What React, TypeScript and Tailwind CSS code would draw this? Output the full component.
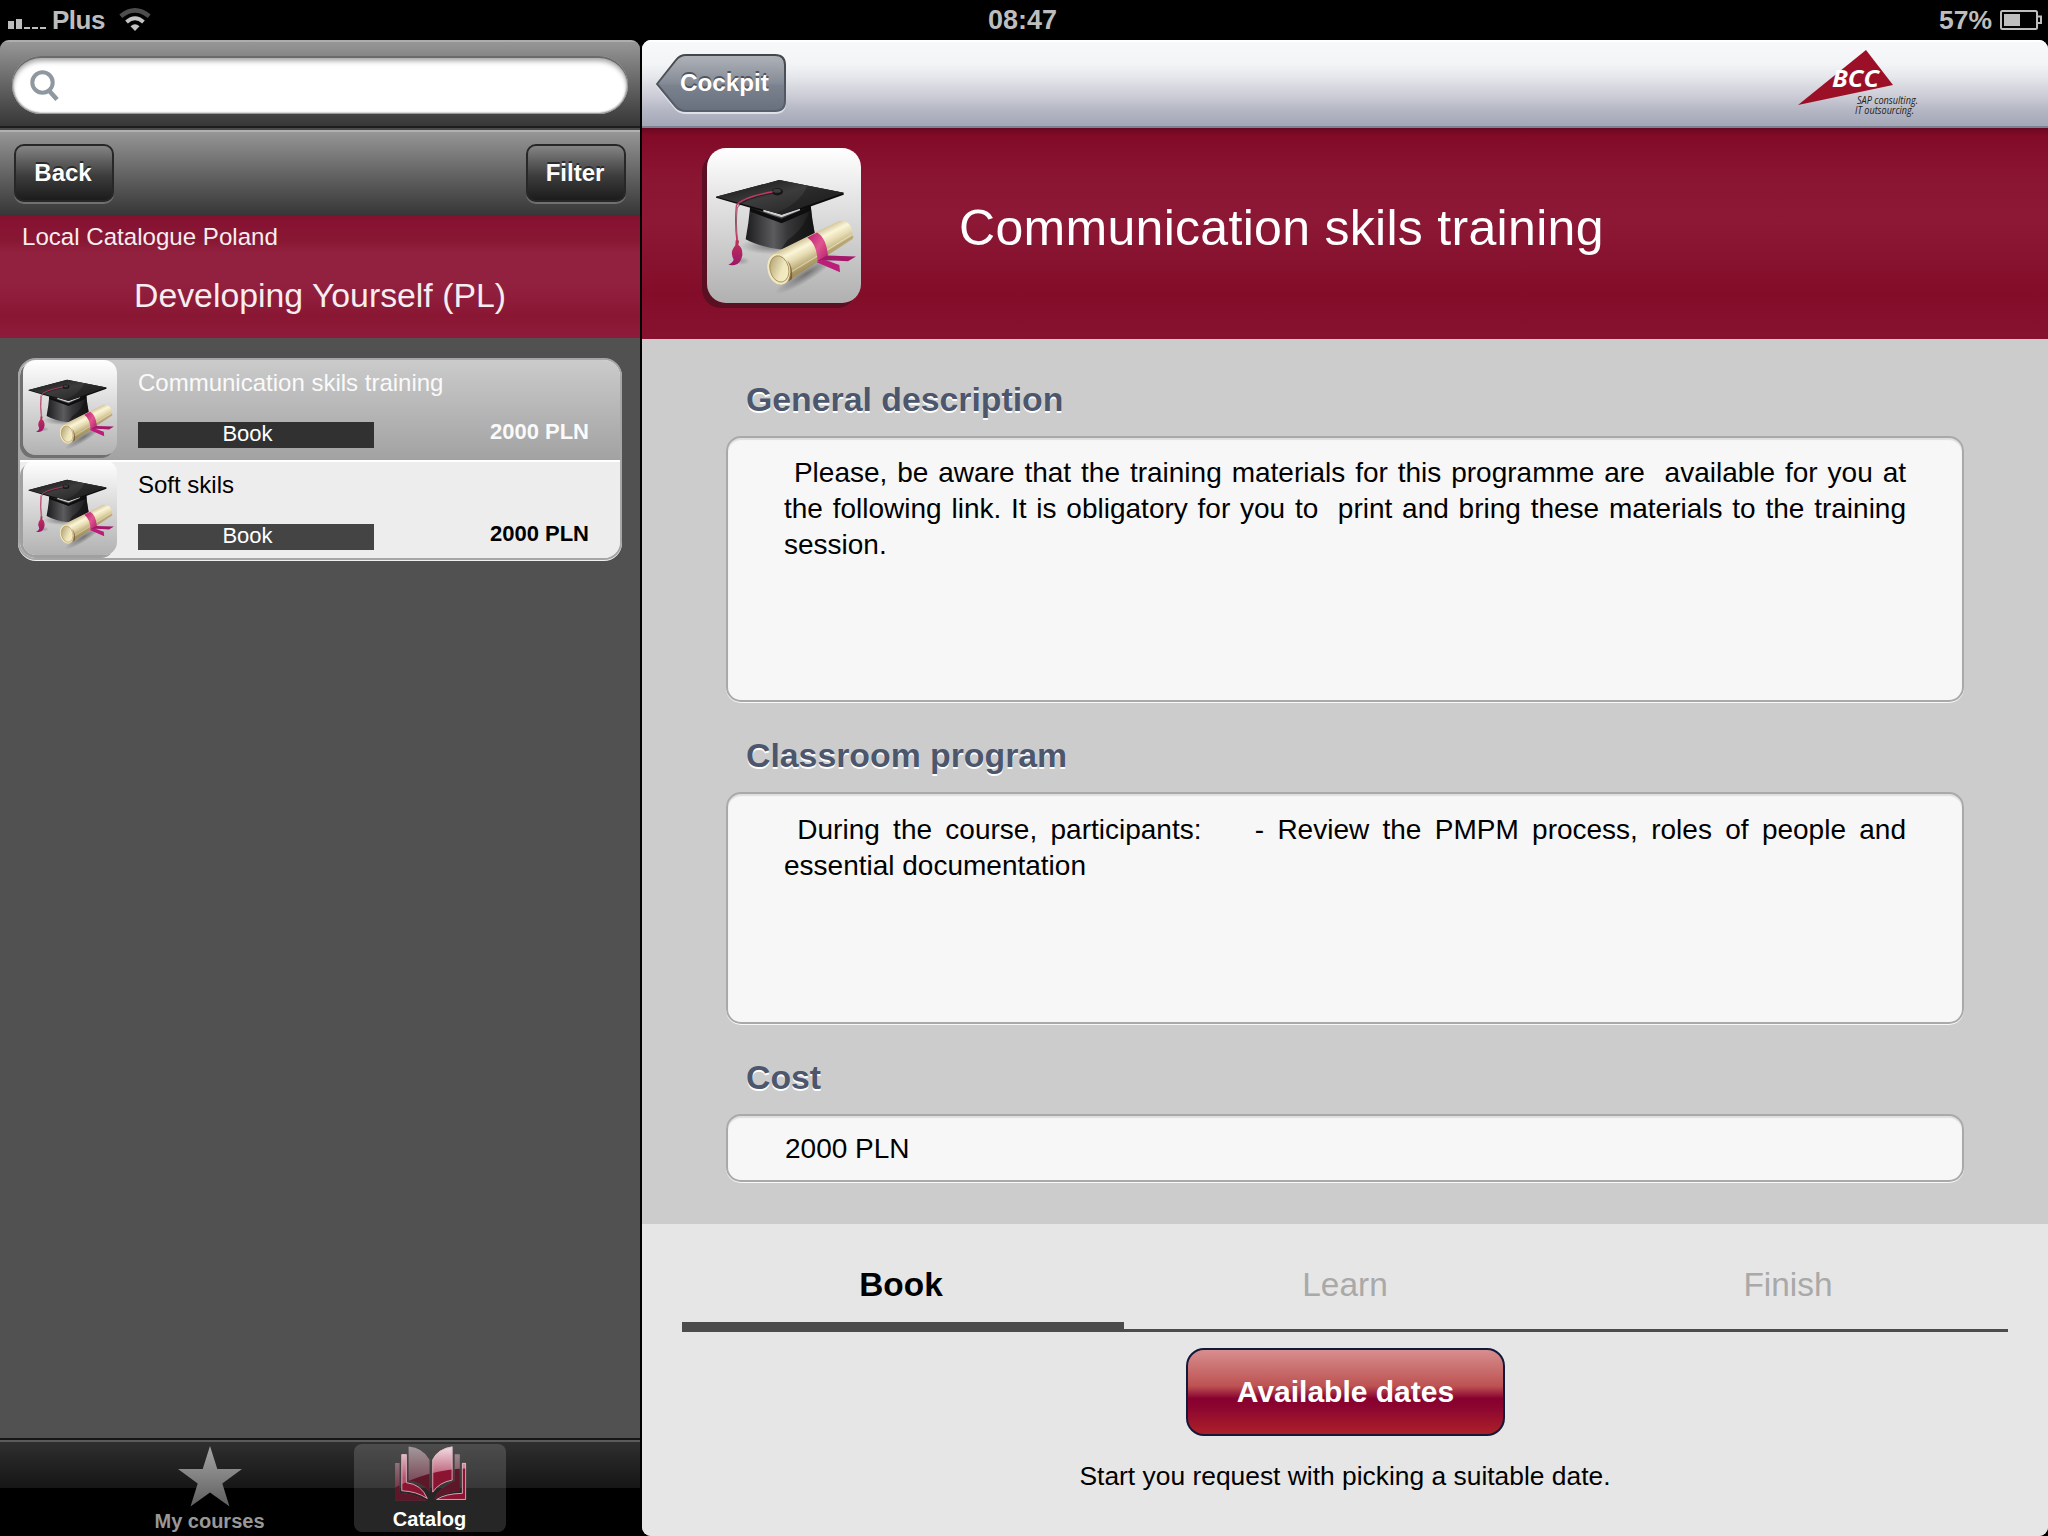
import React from "react";

const heading =
  "ml-[20px] text-[33.8px] leading-[40px] font-bold text-[#4c566c] [text-shadow:0_2px_0_#fff]";
const field =
  "w-[1238px] rounded-[15px] border-2 border-[#a9a9a9] bg-[#f7f7f7] shadow-[0_1px_0_#f8f8f8,inset_0_2px_1px_#dedede] text-[28px] leading-[36px] text-black";

function CourseArt({ id, className }: { id: string; className: string }) {
  const u = (n: string) => `url(#${id}-${n})`;
  return (
    <svg viewBox="21 24 462 464" preserveAspectRatio="none" className={className}>
      <defs>
        <linearGradient id={`${id}-board`} x1="0" y1="0" x2="1" y2="1">
          <stop offset="0" stopColor="#111" />
          <stop offset="0.45" stopColor="#3c3c3c" />
          <stop offset="0.75" stopColor="#2b2b2b" />
          <stop offset="1" stopColor="#0c0c0c" />
        </linearGradient>
        <linearGradient id={`${id}-skull`} x1="0" y1="0" x2="1" y2="0">
          <stop offset="0" stopColor="#1b1b1d" />
          <stop offset="0.4" stopColor="#5c5c5f" />
          <stop offset="0.6" stopColor="#38383a" />
          <stop offset="1" stopColor="#161617" />
        </linearGradient>
        <linearGradient id={`${id}-paper`} gradientUnits="userSpaceOnUse" x1="310" y1="290" x2="350" y2="368">
          <stop offset="0" stopColor="#c9b98c" />
          <stop offset="0.3" stopColor="#fbf6d8" />
          <stop offset="0.55" stopColor="#e5dab0" />
          <stop offset="1" stopColor="#a3905c" />
        </linearGradient>
        <linearGradient id={`${id}-hole`} x1="0" y1="0" x2="1" y2="1">
          <stop offset="0" stopColor="#a8966a" />
          <stop offset="0.6" stopColor="#efe7bd" />
          <stop offset="1" stopColor="#f6f0cb" />
        </linearGradient>
        <linearGradient id={`${id}-band`} x1="0" y1="0" x2="1" y2="1">
          <stop offset="0" stopColor="#b81c6d" />
          <stop offset="0.5" stopColor="#e0558f" />
          <stop offset="1" stopColor="#b01a68" />
        </linearGradient>
        <linearGradient id={`${id}-tassel`} x1="0" y1="0" x2="0" y2="1">
          <stop offset="0" stopColor="#c23258" />
          <stop offset="1" stopColor="#9b1769" />
        </linearGradient>
        <radialGradient id={`${id}-shade`}>
          <stop offset="0" stopColor="#000" stopOpacity="0.4" />
          <stop offset="1" stopColor="#000" stopOpacity="0" />
        </radialGradient>
      </defs>
      <ellipse cx="215" cy="318" rx="95" ry="24" fill={u("shade")} />
      <ellipse cx="320" cy="400" rx="110" ry="22" fill={u("shade")} transform="rotate(-32 320 400)" />
      <ellipse cx="125" cy="362" rx="24" ry="12" fill={u("shade")} opacity="0.5" />
      <path d="M151 195 L332 195 Q336 240 346 290 L243 328 Q175 318 137 297 Q146 250 151 195Z" fill={u("skull")} />
      <path d="M332 198 Q318 262 262 300 L243 328 L346 290 Q336 240 332 198Z" fill="#101011" opacity="0.55" />
      <path d="M150 203 L150 214 L245 249 L332 212 L332 198 L245 236Z" fill="#0d0d0e" />
      <path d="M48 170 L238 120 L431 158 L431 164 L245 230 L48 173Z" fill="#0b0b0c" />
      <path d="M190 214 L245 231 L300 210 L300 206 L245 224 L190 208Z" fill="#cfcfcf" />
      <path d="M48 170 L238 120 L431 158 L245 223Z" fill={u("board")} />
      <path d="M290 131 L431 158 L245 223 L230 218 Q300 190 322 138Z" fill="#101010" opacity="0.35" />
      <ellipse cx="232" cy="155" rx="17" ry="11" fill="#161617" />
      <ellipse cx="231" cy="152" rx="12" ry="6" fill="#3d3d3f" />
      <path d="M220 156 Q125 172 110 200 Q104 250 112 305" fill="none" stroke="#1a0a10" strokeWidth="3" transform="translate(2 3)" opacity="0.5" />
      <path d="M218 155 Q122 173 109 197 Q104 250 111 305" fill="none" stroke="#c03a62" strokeWidth="4" />
      <path d="M107 300 Q113 297 117 303 L115 314 Q128 322 127 345 Q122 372 104 374 Q92 377 85 373 Q98 369 101 358 Q92 340 98 328 Q102 320 106 315Z" fill={u("tassel")} />
      <path d="M215 342 L415 243 Q440 238 453 260 Q459 276 456 284 L461 289 Q460 297 452 300 L250 432 Q232 438 214 415 Q192 376 215 342Z" fill={u("paper")} />
      <path d="M268 406 L458 290" stroke="#a99661" strokeWidth="2.5" fill="none" />
      <path d="M272 396 L455 284" stroke="#fffbe0" strokeWidth="2" fill="none" opacity="0.8" />
      <ellipse cx="236" cy="387" rx="33" ry="47" fill="#f0e8c2" transform="rotate(-14 236 387)" />
      <ellipse cx="238" cy="386" rx="28" ry="40" fill={u("hole")} stroke="#a38a52" strokeWidth="2.5" transform="rotate(-14 238 386)" />
      <path d="M262 360 Q280 392 266 424 L276 416 Q280 380 262 360Z" fill="#7b5230" opacity="0.8" />
      <path d="M322 292 L351 277 Q378 292 384 345 L353 368 Q352 312 322 292Z" fill={u("band")} />
      <path d="M352 362 L380 346 L468 349 L444 363 L385 360Z" fill="#a4186a" />
      <path d="M350 366 L372 358 L418 374 L420 396Z" fill="#bb1d78" />
    </svg>
  );
}

function CourseRow({ id, title, active }: { id: string; title: string; active?: boolean }) {
  return (
    <div
      className={
        active
          ? "flex h-[100px] bg-linear-to-b from-[#cbcbcb] to-[#a2a2a2] text-[#fafafa]"
          : "flex h-[98px] border-t-2 border-white bg-[#ededed] text-black"
      }
    >
      <div
        className={
          active
            ? "ml-[3px] h-[95px] w-[94px] shrink-0 rounded-[13px] bg-linear-to-b from-white to-[#b2b2b2] shadow-[-3px_3px_0_#707070]"
            : "mt-[-2px] ml-[3px] h-[95px] w-[94px] shrink-0 rounded-[13px] bg-linear-to-b from-white to-[#b2b2b2] shadow-[-3px_3px_0_#a0a0a0]"
        }
      >
        <CourseArt id={id} className="h-full w-full" />
      </div>
      <div className="ml-[21px] flex w-[236px] flex-col">
        <div className="mt-[9px] h-[28px] text-[24px] leading-[28px] whitespace-nowrap">{title}</div>
        <div
          className={
            active
              ? "mt-[25px] h-[26px] bg-[#313131] pr-[17px] text-center text-[22px] leading-[23px] text-white"
              : "mt-[25px] h-[26px] bg-[#444] pr-[17px] text-center text-[22px] leading-[23px] text-white"
          }
        >
          Book
        </div>
      </div>
      <div className="ml-auto pt-[58px] pr-[31px] text-[22px] leading-[28px] font-bold">2000 PLN</div>
    </div>
  );
}

function CatalogIcon() {
  return (
    <svg viewBox="158 46 230 180" className="h-[60px] w-[77px]">
      <defs>
        <linearGradient id="pg" gradientUnits="userSpaceOnUse" x1="0" y1="50" x2="0" y2="150">
          <stop offset="0" stopColor="#f3dfe4" />
          <stop offset="1" stopColor="#b5506c" />
        </linearGradient>
        <linearGradient id="pgd" gradientUnits="userSpaceOnUse" x1="0" y1="50" x2="0" y2="180">
          <stop offset="0" stopColor="#a39a9c" />
          <stop offset="1" stopColor="#73394a" />
        </linearGradient>
        <clipPath id="low">
          <path d="M150 186 Q260 120 400 118 V230 H150Z" />
        </clipPath>
      </defs>
      <g fill="url(#pgd)">
        <path d="M163 102 H177 V194 Q220 196 262 218 H163Z" />
        <path d="M205 51 Q250 55 270 92 V190 Q245 160 205 157Z" />
        <path d="M348 75 H364 V188 Q320 192 284 214 Q300 180 348 158Z" />
      </g>
      <g fill="url(#pg)">
        <path d="M183 75 H199 V162 Q245 168 264 213 Q230 190 183 188Z" />
        <path d="M341 51 Q296 57 279 92 V194 Q300 162 341 155Z" />
        <path d="M371 102 H383 V216 H290 Q320 196 371 195Z" />
      </g>
      <g clipPath="url(#low)">
        <g fill="#5d1729">
          <path d="M163 102 H177 V194 Q220 196 262 218 H163Z" />
          <path d="M205 51 Q250 55 270 92 V190 Q245 160 205 157Z" />
          <path d="M348 75 H364 V188 Q320 192 284 214 Q300 180 348 158Z" />
        </g>
        <g fill="#8c1433">
          <path d="M183 75 H199 V162 Q245 168 264 213 Q230 190 183 188Z" />
          <path d="M341 51 Q296 57 279 92 V194 Q300 162 341 155Z" />
          <path d="M371 102 H383 V216 H290 Q320 196 371 195Z" />
        </g>
      </g>
      <g fill="none" stroke="#e2bcc6" strokeWidth="2.5">
        <path d="M184 76 H198 V163 Q245 168 263 212 Q230 190 184 188Z" />
        <path d="M340 52 Q296 58 280 92 V192 Q300 162 340 155Z" />
        <path d="M372 103 H382 V215 H292 Q320 197 372 196Z" />
      </g>
    </svg>
  );
}

function StatusBar() {
  return (
    <div className="flex h-10 items-center bg-black font-bold text-[#bdbdbd]">
      <div className="flex w-[683px] items-center">
        <div className="ml-[8px] flex h-[18px] items-end gap-[2px]">
          <i className="h-[8px] w-[6px] bg-[#bdbdbd]" />
          <i className="h-[10px] w-[6px] bg-[#bdbdbd]" />
          <i className="h-[2px] w-[6px] bg-[#bdbdbd]" />
          <i className="h-[2px] w-[6px] bg-[#bdbdbd]" />
          <i className="h-[2px] w-[6px] bg-[#bdbdbd]" />
        </div>
        <span className="ml-[6px] w-[53px] text-[26px] leading-[40px] tracking-[-0.5px]">Plus</span>
        <svg viewBox="0 0 32 24" className="ml-[14px] h-[24px] w-[32px]">
          <path d="M16 23 L11.5 18.2 Q16 14.5 20.500 18.200Z" fill="#c4c4c4" />
          <path d="M7.500 14 Q16 6.500 24.500 14" fill="none" stroke="#c4c4c4" strokeWidth="4" />
          <path d="M1.800 8.300 Q16 -3.500 30.200 8.300" fill="none" stroke="#4d4d4d" strokeWidth="4.500" />
        </svg>
      </div>
      <div className="w-[682px] text-center text-[27px] leading-[40px]">
        <span className="ml-[-3px]">08:47</span>
      </div>
      <div className="flex w-[683px] items-center justify-end pr-[6px]">
        <span className="mr-[8px] text-[26.5px] leading-[40px]">57%</span>
        <svg viewBox="0 0 42 20" className="h-[20px] w-[42px]">
          <rect x="1" y="1" width="36" height="18" rx="1.500" fill="none" stroke="#bdbdbd" strokeWidth="2" />
          <rect x="4" y="4" width="16" height="12" fill="#bdbdbd" />
          <path d="M38 6.500 H41 V13 H38" fill="none" stroke="#bdbdbd" strokeWidth="2" />
        </svg>
      </div>
    </div>
  );
}

function Sidebar() {
  const btn =
    "h-[58px] w-[100px] rounded-[10px] border-2 border-[#272727] bg-linear-to-b from-[#858585] via-[#3d3d3d] via-55% to-[#1c1c1c] pr-[2px] text-center text-[24px] leading-[53px] font-bold text-white shadow-[0_2px_0_#707070] [text-shadow:0_-2px_0_#2b2b2b]";
  return (
    <div className="flex h-full w-[640px] flex-col overflow-hidden rounded-t-[9px] bg-[#515151]">
      <div className="h-[90px] border-t-2 border-[#adadad] bg-linear-to-b from-[#979797] to-[#333] px-[12px] pt-[14px] shadow-[inset_0_-2px_0_#4a4a4a,inset_0_-4px_0_#1d1d1d]">
        <div className="flex h-[58px] w-[616px] items-center rounded-full bg-white pl-[18px] shadow-[inset_0_2px_0_#6b6b6b,inset_0_5px_5px_#a5a5a5,inset_0_0_2px_1px_#777]">
          <svg viewBox="0 0 29 31" className="h-[31px] w-[29px]">
            <circle cx="12.500" cy="12.500" r="10.200" fill="none" stroke="#8f98a0" strokeWidth="4" />
            <path d="M18.500 20 L27 29.500" stroke="#8f98a0" strokeWidth="4.600" />
          </svg>
        </div>
      </div>
      <div className="flex h-[86px] justify-between border-t-2 border-[#b0b0b0] bg-linear-to-b from-[#969696] to-[#363636] px-[14px] pt-[12px]">
        <div className={btn}>Back</div>
        <div className={btn}>Filter</div>
      </div>
      <div className="h-[122px] bg-[linear-gradient(to_bottom,#851131_0%,#881734_20%,#92203f_30%,#92203f_55%,#891734_82%,#8d1c3a_100%)] text-[#f5edef]">
        <div className="pl-[22px] text-[24.1px] leading-[41px]">Local Catalogue Poland</div>
        <div className="text-center text-[33.8px] leading-[76px]">Developing Yourself (PL)</div>
      </div>
      <div className="mt-[20px] ml-[18px] w-[604px] overflow-hidden rounded-[18px] border-2 border-[#a6a6a6] bg-[#ededed] shadow-[0_1px_0_#f0f0f0]">
        <CourseRow id="row1" title="Communication skils training" active />
        <CourseRow id="row2" title="Soft skils" />
      </div>
      <div className="mt-auto flex h-[98px] border-t-2 border-[#161616] bg-linear-to-b from-[#303030] from-0% via-[#161616] via-50% to-black to-50% pl-[65px] shadow-[inset_0_2px_0_#5b5b5b]">
        <div className="flex w-[289px] flex-col items-center pt-[6px]">
          <svg viewBox="0 0 64 61" className="h-[61px] w-[64px]">
            <defs>
              <linearGradient id="star" x1="0" y1="0" x2="0" y2="1">
                <stop offset="0" stopColor="#a6a6a6" />
                <stop offset="1" stopColor="#5e5e5e" />
              </linearGradient>
            </defs>
            <path d="M32 0 L39.300 23 H64 L44.300 37.500 L51.500 60.500 L32 46.500 L12.500 60.500 L19.700 37.500 L0 23 H24.700Z" fill="url(#star)" />
          </svg>
          <div className="mt-[2px] text-[20px] leading-[24px] font-bold text-[#989898]">My courses</div>
        </div>
        <div className="mt-[4px] flex h-[88px] w-[152px] flex-col items-center rounded-[8px] bg-white/15 pt-[1px]">
          <CatalogIcon />
          <div className="mt-[4px] pr-[1px] text-[20px] leading-[25px] font-bold text-white">Catalog</div>
        </div>
      </div>
    </div>
  );
}

function NavBar() {
  return (
    <div className="flex h-[88px] justify-between border-b-2 border-[#7d8293] bg-[linear-gradient(to_bottom,#f8f9fa_0%,#f3f4f6_28%,#e6e7eb_43%,#cacbd5_66%,#b4b6c4_82%,#a3a7b6_100%)] shadow-[inset_0_2px_0_#fff]">
      <div className="relative mt-[14px] ml-[14px] h-[60px] w-[131px]">
        <svg viewBox="0 0 131 60" className="absolute inset-0 h-[60px] w-[131px]">
          <defs>
            <linearGradient id="back" x1="0" y1="0" x2="0" y2="1">
              <stop offset="0" stopColor="#b0b3b9" />
              <stop offset="0.5" stopColor="#858c97" />
              <stop offset="0.55" stopColor="#7b828e" />
              <stop offset="1" stopColor="#68707e" />
            </linearGradient>
            <linearGradient id="backEdge" x1="0" y1="0" x2="0" y2="1">
              <stop offset="0" stopColor="#43464b" />
              <stop offset="1" stopColor="#59606d" />
            </linearGradient>
          </defs>
          <path d="M1 30 L20 6 Q24 1 30 1 H119 Q129 1 129 11 V47 Q129 57 119 57 H30 Q24 57 20 53Z" fill="none" stroke="#dfe1e8" strokeWidth="2" transform="translate(0 2)" />
          <path d="M1 30 L20 6 Q24 1 30 1 H119 Q129 1 129 11 V47 Q129 57 119 57 H30 Q24 57 20 53Z" fill="url(#back)" stroke="url(#backEdge)" strokeWidth="2" />
        </svg>
        <span className="relative block pl-[24px] text-[24.200px] leading-[57px] font-bold text-white [text-shadow:0_-2px_0_#4f545d]">
          Cockpit
        </span>
      </div>
      <svg viewBox="1798 48 130 72" className="mt-[8px] mr-[120px] h-[72px] w-[130px]">
        <path d="M1866 50 L1893 85 L1798 105Z" fill="#9c1027" />
        <text x="1832" y="87" textLength="47" lengthAdjust="spacingAndGlyphs" fontFamily="Open Sans" fontStyle="italic" fontWeight="700" fontSize="22.500" fill="#fff">
          BCC
        </text>
        <text fontFamily="Open Sans" fontStyle="italic" fontSize="10" fill="#222">
          <tspan x="1857" y="104" textLength="61" lengthAdjust="spacingAndGlyphs">
            SAP consulting.
          </tspan>
          <tspan x="1855" y="113.500" textLength="59" lengthAdjust="spacingAndGlyphs">
            IT outsourcing.
          </tspan>
        </text>
      </svg>
    </div>
  );
}

function Detail() {
  const justified = "whitespace-pre [text-align-last:justify]";
  return (
    <div className="flex h-full w-[1406px] flex-col overflow-hidden rounded-[9px] bg-[#ccc]">
      <NavBar />
      <div className="flex h-[211px] items-start bg-[linear-gradient(to_bottom,#670820_0px,#810a27_7px,#8a1532_50px,#8c1836_95px,#830d29_165px,#871230_211px)]">
        <div className="mt-[20px] ml-[65px] h-[155px] w-[154px] rounded-[19px] bg-linear-to-b from-white to-[#b0b0b0] shadow-[-5px_5px_0_#5a0f22]">
          <CourseArt id="hero" className="h-full w-full" />
        </div>
        <h1 className="mt-[72px] ml-[98px] text-[50px] leading-[56px] tracking-[0.3px] text-white">
          Communication skils training
        </h1>
      </div>
      <div className="h-[885px] pt-[40px] pl-[84px]">
        <h2 className={heading}>General description</h2>
        <div className={`${field} mt-[17px] h-[266px] px-[56px] pt-[17px]`}>
          <div className={justified}>
            {"\u00a0Please, be aware that the training materials for this programme are \u00a0available for you at"}
          </div>
          <div className={justified}>
            {"the following link. It is obligatory for you to \u00a0print and bring these materials to the training"}
          </div>
          <div>session.</div>
        </div>
        <h2 className={`${heading} mt-[33px]`}>Classroom program</h2>
        <div className={`${field} mt-[17px] h-[232px] px-[56px] pt-[18px]`}>
          <div className={justified}>
            {"\u00a0During the course, participants: \u00a0\u00a0 - Review the PMPM process, roles of people and"}
          </div>
          <div>essential documentation</div>
        </div>
        <h2 className={`${heading} mt-[33px]`}>Cost</h2>
        <div className={`${field} mt-[17px] h-[68px] px-[57px] pt-[15px]`}>2000 PLN</div>
      </div>
      <div className="flex h-[312px] flex-col items-center bg-[#e6e6e6]">
        <div className="mt-[32px] grid h-[76px] w-[1326px] grid-cols-3 items-end text-center text-[33.400px] leading-[58px] text-[#a9a9a9]">
          <div className="h-[76px] border-b-[10px] border-[#4c4c4c] pr-[4px] font-bold text-black">Book</div>
          <div className="h-[76px] border-b-[3px] border-[#4c4c4c]">Learn</div>
          <div className="h-[76px] border-b-[3px] border-[#4c4c4c] pl-[2px]">Finish</div>
        </div>
        <div className="mt-[16px] ml-[1px] h-[88px] w-[319px] rounded-[18px] border-2 border-[#14193a] bg-[linear-gradient(to_bottom,#d88e8e_0%,#bd5252_43%,#87002f_58%,#8c0530_68%,#ac2129_100%)] text-center text-[30px] leading-[84px] font-bold text-white">
          Available dates
        </div>
        <div className="mt-[23px] text-[26.400px] leading-[34px] text-black">
          Start you request with picking a suitable date.
        </div>
      </div>
    </div>
  );
}

export default function App() {
  return (
    <div className="h-[1536px] w-[2048px] overflow-hidden bg-black font-['Liberation_Sans',Arial,sans-serif]">
      <StatusBar />
      <div className="flex h-[1496px] justify-between">
        <Sidebar />
        <Detail />
      </div>
    </div>
  );
}
